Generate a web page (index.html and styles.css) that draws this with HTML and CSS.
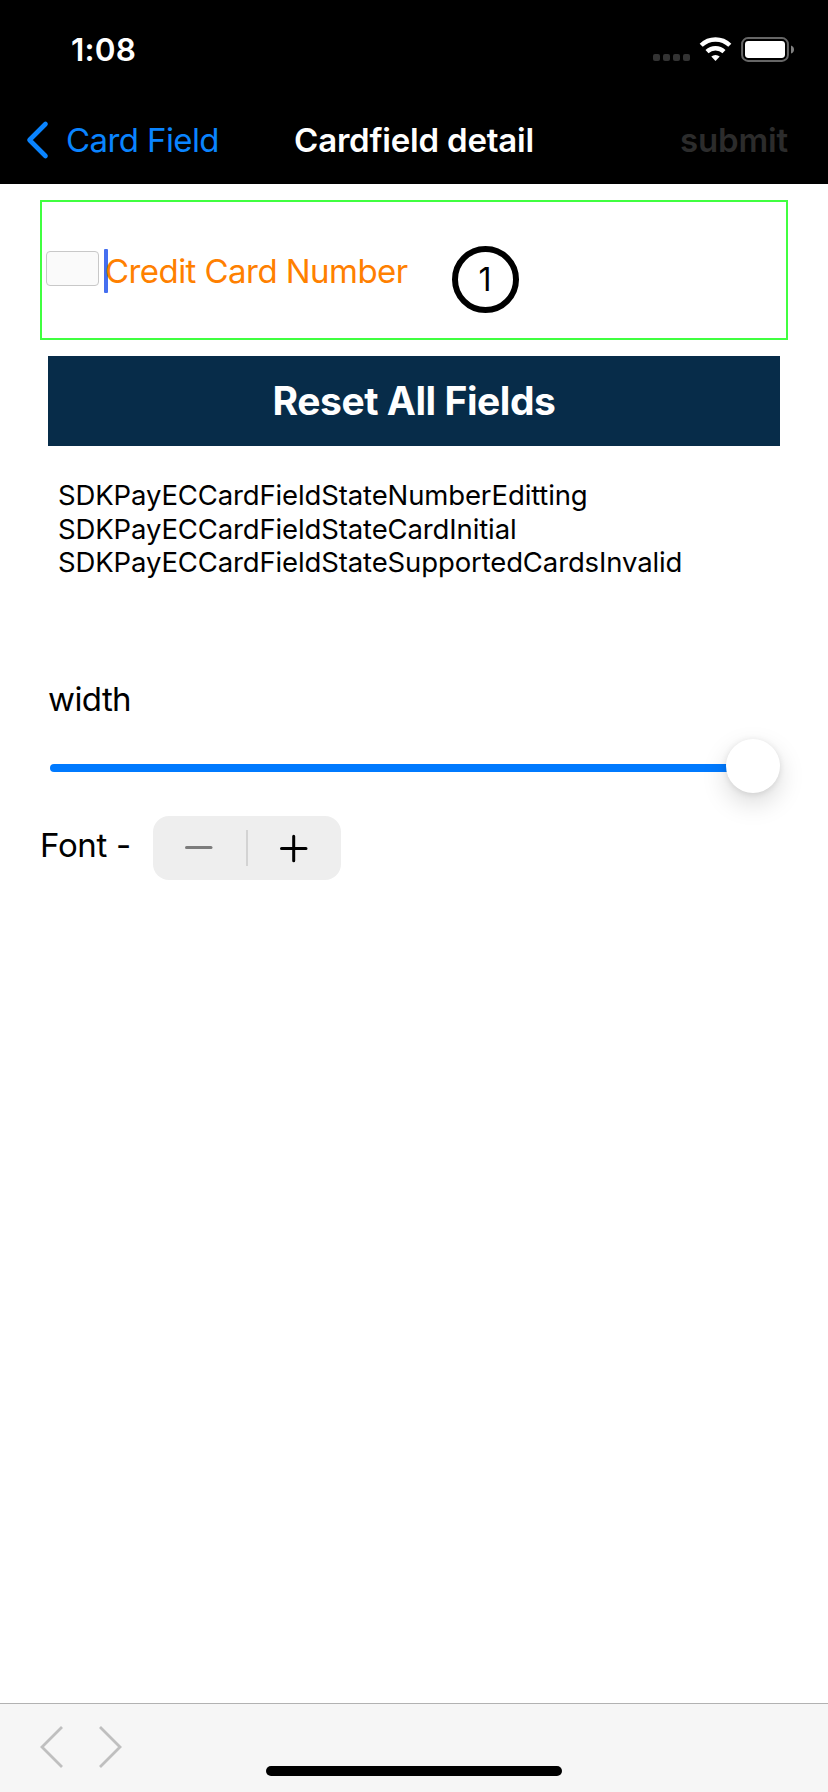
FILE: index.html
```html
<!DOCTYPE html>
<html lang="en">
<head>
<meta charset="utf-8">
<title>Cardfield detail</title>
<link rel="stylesheet" href="styles.css">
</head>
<body>
<div class="screen">
  <header class="header">
    <div class="status">
      <span class="time">1:08</span>
      <svg class="status-icons" width="142" height="26" viewBox="0 0 142 26">
        <g fill="#333"><rect x="0" y="17" width="7" height="7" rx="2"/><rect x="10" y="17" width="7" height="7" rx="2"/><rect x="20" y="17" width="7" height="7" rx="2"/><rect x="30" y="17" width="7" height="7" rx="2"/></g>
        <g fill="none" stroke="#fff" stroke-width="4.4">
          <path d="M48.2 8.3a20.4 20.4 0 0 1 28.6 0"/>
          <path d="M54 14.6a12.4 12.4 0 0 1 17 0"/>
        </g>
        <path d="M58.3 19.6a6.4 6.4 0 0 1 8.4 0L62.5 24z" fill="#fff"/>
        <rect x="89.1" y="1.1" width="45.8" height="22.8" rx="6" fill="none" stroke="#666" stroke-width="2"/>
        <rect x="92" y="4" width="40" height="17" rx="3.4" fill="#fff"/>
        <path d="M138 8.5q3 1 3 4t-3 4z" fill="#808080"/>
      </svg>
    </div>
    <nav class="nav">
      <a class="back"><svg class="back-icon" width="24" height="40" viewBox="0 0 24 40"><path d="M20.5 4L4.5 20l16 16" fill="none" stroke="#0a84ff" stroke-width="4.6" stroke-linecap="round" stroke-linejoin="round"/></svg><span class="back-label">Card Field</span></a>
      <h1 class="title">Cardfield detail</h1>
      <span class="submit">submit</span>
    </nav>
  </header>
  <main class="main">
    <div class="card-field">
      <span class="card-icon"></span>
      <span class="caret"></span>
      <span class="placeholder">Credit Card Number</span>
      <span class="marker">1</span>
    </div>
    <button class="reset">Reset All Fields</button>
    <div class="states">
      <div>SDKPayECCardFieldStateNumberEditting</div>
      <div>SDKPayECCardFieldStateCardInitial</div>
      <div>SDKPayECCardFieldStateSupportedCardsInvalid</div>
    </div>
    <div class="width-label">width</div>
    <div class="slider"><span class="track"></span><span class="thumb"></span></div>
    <div class="font-row">
      <span class="font-label">Font -</span>
      <svg class="stepper" width="188" height="64" viewBox="0 0 188 64">
        <rect width="188" height="64" rx="16" fill="#eee"/>
        <path d="M33.5 31.5h24.5" stroke="#7c7c7c" stroke-width="3" stroke-linecap="round"/>
        <path d="M94 14v36" stroke="#d3d3d3" stroke-width="2"/>
        <path d="M128.5 32.5h24.5M140.7 20.2v24.5" stroke="#000" stroke-width="3" stroke-linecap="round"/>
      </svg>
    </div>
  </main>
  <footer class="toolbar">
    <svg class="arrows" width="84" height="44" viewBox="0 0 84 44" fill="none" stroke="#bfbfbf" stroke-width="2.8"><path d="M23 2L3 22l20 20M61 2l20 20-20 20"/></svg>
    <span class="home"></span>
  </footer>
</div>
</body>
</html>
```
FILE: styles.css
```css
* { box-sizing: border-box; }
body { margin: 0; background: #fff; color: #000; font-family: Inter, "Liberation Sans", sans-serif; font-size: 33px; }
.screen { width: 828px; height: 1792px; display: flex; flex-direction: column; background: #fff; overflow: hidden; }
.header { height: 184px; background: #000; color: #fff; flex: none; }
.status { height: 99px; padding: 0 33px 0 71px; display: flex; align-items: center; justify-content: space-between; }
.time { font-size: 31.5px; font-weight: 600; line-height: 40px; letter-spacing: .2px; }
.nav { height: 82px; padding: 0 40px; display: grid; grid-template-columns: 1fr auto 1fr; align-items: center; line-height: 40px; white-space: nowrap; }
.back { display: flex; align-items: center; gap: 17px; margin-left: -15px; color: #0a84ff; letter-spacing: -.6px; }
.back-icon { flex: none; }
.title { margin: 0; font-size: 33px; font-weight: 600; letter-spacing: -.2px; }
.submit { color: #2c2c2c; font-weight: 600; letter-spacing: -.15px; justify-self: end; }
.main { flex: 1; padding: 16px 40px 0; display: flex; flex-direction: column; }
.card-field { height: 140px; border: 2px solid #40ff40; padding-left: 4px; display: flex; align-items: flex-start; white-space: nowrap; }
.card-icon { width: 53px; height: 35px; margin-top: 49px; border: 1px solid #c8c8c8; border-radius: 4px; background: #fafafa; }
.caret { width: 4px; height: 44px; margin: 47px -3px 0 5px; border-radius: 1px; background: #456ff0; }
.placeholder { width: 304px; margin-top: 49px; line-height: 40px; letter-spacing: -.56px; color: #ff8000; }
.marker { width: 67px; height: 67px; margin: 44px 0 0 42.5px; border: 6.5px solid #000; border-radius: 50%; display: flex; align-items: center; justify-content: center; font-size: 32px; }
.reset { height: 90px; margin: 16px 8px 0; padding: 0; border: 0; background: #072c49; color: #fff; font: 700 39px/90px Inter, sans-serif; letter-spacing: -.45px; }
.states { margin: 33px 0 0 18px; font-size: 27.5px; line-height: 33.5px; letter-spacing: -.13px; white-space: nowrap; }
.width-label { margin: 99px 0 0 8px; line-height: 40px; letter-spacing: -.6px; }
.slider { height: 54px; margin: 20px 8px 0 10px; display: flex; align-items: center; }
.track { flex: 1; height: 8px; margin: 4px -4px 0 0; border-radius: 4px; background: #007aff; }
.thumb { width: 54px; height: 54px; border-radius: 50%; background: #fff; box-shadow: 0 10px 26px rgba(0,0,0,.15), 0 1px 6px rgba(0,0,0,.1); }
.font-row { display: flex; margin-top: 23px; height: 64px; }
.font-label { width: 113px; line-height: 58px; letter-spacing: -.3px; white-space: nowrap; }
.toolbar { flex: none; height: 89px; border-top: 1px solid #b2b2b2; background: #f6f6f6; position: relative; padding: 21px 0 0 39px; }
.home { position: absolute; left: 266px; top: 62px; width: 296px; height: 10px; border-radius: 5px; background: #000; }
```
